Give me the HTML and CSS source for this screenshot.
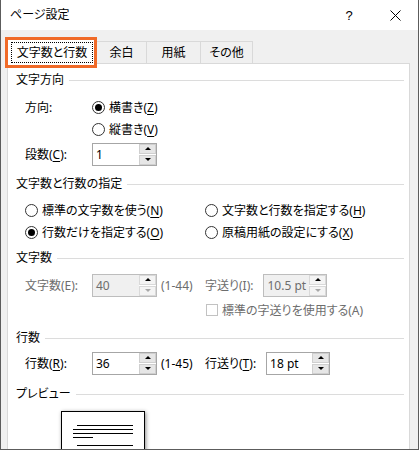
FILE: index.html
```html
<!DOCTYPE html>
<html lang="ja">
<head>
<meta charset="utf-8">
<title>ページ設定</title>
<link rel="stylesheet" href="styles.css">
</head>
<body>
<div class="window">
  <div class="titlebar">
    <span class="title">ページ設定</span>
    <div class="caption-buttons">
      <span class="caption-btn caption-help">?</span>
      <span class="caption-btn">
        <svg width="11" height="11" viewBox="0 0 11 11"><path d="M0.5 0.5 L10.5 10.5 M10.5 0.5 L0.5 10.5" stroke="#000" stroke-width="1" fill="none"/></svg>
      </span>
    </div>
  </div>

  <div class="tabs">
    <div class="tab tab--active"><span class="tab-focus">文字数と行数</span></div>
    <div class="tab tab--margins">余白</div>
    <div class="tab tab--paper">用紙</div>
    <div class="tab tab--other">その他</div>
  </div>
  <div class="tab-highlight"></div>

  <div class="panel">
    <div class="group-title">文字方向</div>
    <div class="row row--radio row--first">
      <span class="label">方向:</span>
      <span class="radio radio--checked"></span><span>横書き(<u>Z</u>)</span>
    </div>
    <div class="row row--radio">
      <span class="label"></span>
      <span class="radio"></span><span>縦書き(<u>V</u>)</span>
    </div>
    <div class="row row--spin row--columns">
      <span class="label">段数(<u>C</u>):</span>
      <div class="spin">
        <span class="spin-value">1</span>
        <span class="spin-buttons"><span class="spin-btn spin-btn--up"></span><span class="spin-btn spin-btn--down"></span></span>
      </div>
    </div>

    <div class="group-title group-title--grid">文字数と行数の指定</div>
    <div class="choice-grid">
      <div class="choice"><span class="radio"></span><span>標準の文字数を使う(<u>N</u>)</span></div>
      <div class="choice"><span class="radio"></span><span>文字数と行数を指定する(<u>H</u>)</span></div>
      <div class="choice"><span class="radio radio--checked"></span><span>行数だけを指定する(<u>O</u>)</span></div>
      <div class="choice"><span class="radio"></span><span>原稿用紙の設定にする(<u>X</u>)</span></div>
    </div>

    <div class="group-title group-title--chars">文字数</div>
    <div class="row row--spin row--chars is-disabled">
      <span class="label">文字数(E):</span>
      <div class="spin-cell">
        <div class="spin spin--disabled">
          <span class="spin-value">40</span>
          <span class="spin-buttons"><span class="spin-btn spin-btn--up"></span><span class="spin-btn spin-btn--down spin-btn--off"></span></span>
        </div>
        <span class="range">(1-44)</span>
      </div>
      <span class="label-2">字送り(I):</span>
      <div class="spin spin--wide spin--disabled">
        <span class="spin-value">10.5 pt</span>
        <span class="spin-buttons"><span class="spin-btn spin-btn--up"></span><span class="spin-btn spin-btn--down spin-btn--off"></span></span>
      </div>
    </div>
    <div class="row row--radio row--check is-disabled">
      <span class="checkbox"></span><span>標準の字送りを使用する(A)</span>
    </div>

    <div class="group-title group-title--lines">行数</div>
    <div class="row row--spin row--lines">
      <span class="label">行数(<u>R</u>):</span>
      <div class="spin-cell">
        <div class="spin">
          <span class="spin-value">36</span>
          <span class="spin-buttons"><span class="spin-btn spin-btn--up"></span><span class="spin-btn spin-btn--down"></span></span>
        </div>
        <span class="range">(1-45)</span>
      </div>
      <span class="label-2">行送り(<u>T</u>):</span>
      <div class="spin spin--wide">
        <span class="spin-value">18 pt</span>
        <span class="spin-buttons"><span class="spin-btn spin-btn--up"></span><span class="spin-btn spin-btn--down"></span></span>
      </div>
    </div>

    <div class="group-title group-title--preview">プレビュー</div>
    <div class="preview-page">
      <svg width="82" height="40" viewBox="0 0 82 40">
        <g stroke="#000" stroke-width="1">
          <line x1="15" y1="13.5" x2="71" y2="13.5"/>
          <line x1="11" y1="17.5" x2="71" y2="17.5"/>
          <line x1="11" y1="21.5" x2="71" y2="21.5"/>
          <line x1="11" y1="25.5" x2="31" y2="25.5"/>
          <line x1="15" y1="33.5" x2="71" y2="33.5"/>
        </g>
      </svg>
    </div>
  </div>
</div>
</body>
</html>
```

FILE: styles.css
```css
* { box-sizing: border-box; }

html, body {
  margin: 0;
  padding: 0;
  background: #fff;
}

body {
  font-family: "Noto Sans", "Noto Sans CJK JP", sans-serif;
  font-size: 12px;
  color: #000;
  font-feature-settings: "palt";
}

u {
  text-decoration: underline;
  text-underline-offset: 2px;
}

.window {
  position: relative;
  width: 419px;
  height: 450px;
  border: 1px solid #5c5c5c;
  border-top: none;
  background: #f0f0f0;
  display: flex;
  flex-direction: column;
  overflow: hidden;
}

/* title bar */
.titlebar {
  flex: none;
  height: 30px;
  background: #fff;
  display: flex;
  align-items: center;
  padding-left: 9px;
}
.title { line-height: 16px; }
.caption-buttons {
  margin-left: auto;
  display: flex;
  height: 30px;
}
.caption-btn {
  width: 46px;
  height: 30px;
  display: flex;
  align-items: center;
  justify-content: center;
}
.caption-help {
  font-family: "Liberation Sans", sans-serif;
  font-size: 13px;
  padding-top: 1px;
}

/* tabs */
.tabs {
  flex: none;
  height: 33px;
  display: flex;
  align-items: flex-start;
  padding: 11px 0 0 6px;
}
.tab {
  height: 22px;
  border: 1px solid #d9d9d9;
  border-bottom: none;
  margin-left: -1px;
  background: #f0f0f0;
  text-align: center;
  line-height: 21px;
}
.tab--active {
  position: relative;
  z-index: 1;
  margin: -2px 0 0 0;
  width: 90px;
  height: 25px;
  background: #fff;
  padding: 2px 3px 0;
}
.tab-focus {
  display: block;
  height: 21px;
  border: 1px dotted #000;
  line-height: 19px;
  text-align: center;
}
.tab--margins { width: 51px; }
.tab--paper { width: 55px; }
.tab--other { width: 53px; }

.tab-highlight {
  position: absolute;
  left: 4px;
  top: 37px;
  width: 92px;
  height: 31px;
  border: 3px solid #f06a28;
  z-index: 2;
}

/* panel */
.panel {
  flex: none;
  height: 420px;
  width: 403px;
  margin-left: 6px;
  background: #fff;
  border: 1px solid #d9d9d9;
  padding: 8px 5px 0 8px;
}

.group-title {
  display: flex;
  align-items: center;
  gap: 5px;
  height: 16px;
  line-height: 16px;
  white-space: nowrap;
}
.group-title::after {
  content: "";
  flex: 1;
  height: 1px;
  background: #dcdcdc;
}
.group-title--grid { margin-top: 10px; }
.group-title--chars { margin-top: 7px; }
.group-title--lines { margin-top: 9px; }
.group-title--preview { margin-top: 11px; }

.row {
  display: flex;
  align-items: center;
  padding-left: 9px;
  white-space: nowrap;
}
.row--radio { height: 22px; }
.row--spin { height: 24px; }
.row--first { margin-top: 8px; }
.row--columns { margin-top: 2px; }
.row--chars { margin-top: 7px; }
.row--check { margin-top: 2px; padding-left: 190px; }
.row--lines { margin-top: 5px; }

.is-disabled { color: #6d6d6d; }

.label {
  flex: none;
  width: 67px;
}
.label-2 { margin-right: 10px; }

.spin-cell {
  flex: none;
  width: 113px;
  display: flex;
  align-items: center;
  gap: 4px;
}

/* radio & checkbox */
.radio {
  flex: none;
  width: 13px;
  height: 13px;
  margin-right: 4px;
  border: 1px solid #333;
  border-radius: 50%;
  background: #fff;
  display: flex;
  align-items: center;
  justify-content: center;
}
.radio--checked::after {
  content: "";
  width: 7px;
  height: 7px;
  border-radius: 50%;
  background: #000;
}
.checkbox {
  flex: none;
  width: 12px;
  height: 12px;
  margin-right: 4px;
  border: 1px solid #c2c2c2;
  background: #fff;
}

.choice-grid {
  display: grid;
  grid-template-columns: 180px auto;
  grid-auto-rows: 22px;
  margin-top: 7px;
  padding-left: 9px;
}
.choice {
  display: flex;
  align-items: center;
  white-space: nowrap;
}

/* spin box */
.spin {
  flex: none;
  width: 65px;
  height: 23px;
  border: 1px solid #a6a6a6;
  background: #fff;
  display: flex;
}
.spin--wide { width: 64px; }
.spin-value {
  flex: 1;
  padding-left: 3px;
  line-height: 21px;
  white-space: nowrap;
  overflow: hidden;
}
.spin-buttons {
  flex: none;
  width: 17px;
  display: flex;
  flex-direction: column;
  gap: 1px;
}
.spin-btn {
  flex: 1;
  background: #e6e6e6;
  border: 1px solid #cfcfcf;
  display: flex;
  align-items: center;
  justify-content: center;
}
.spin-btn--up::before {
  content: "";
  border-left: 3px solid transparent;
  border-right: 3px solid transparent;
  border-bottom: 3px solid #000;
}
.spin-btn--down::before {
  content: "";
  border-left: 3px solid transparent;
  border-right: 3px solid transparent;
  border-top: 3px solid #000;
}
.spin--disabled {
  border-color: #bdbdbd;
}
.spin--disabled .spin-value {
  background: #f0f0f0;
}
.spin--disabled .spin-btn {
  background: #f4f4f4;
  border-color: #d9d9d9;
}
.spin-btn--off::before { border-top-color: #a8a8a8; }

/* preview */
.preview-page {
  width: 84px;
  height: 60px;
  margin: 9px 0 0 45px;
  border: 1px solid #000;
  background: #fff;
  box-shadow: 1px 1px 4px rgba(0, 0, 0, 0.45);
}
.preview-page svg { display: block; }
```
